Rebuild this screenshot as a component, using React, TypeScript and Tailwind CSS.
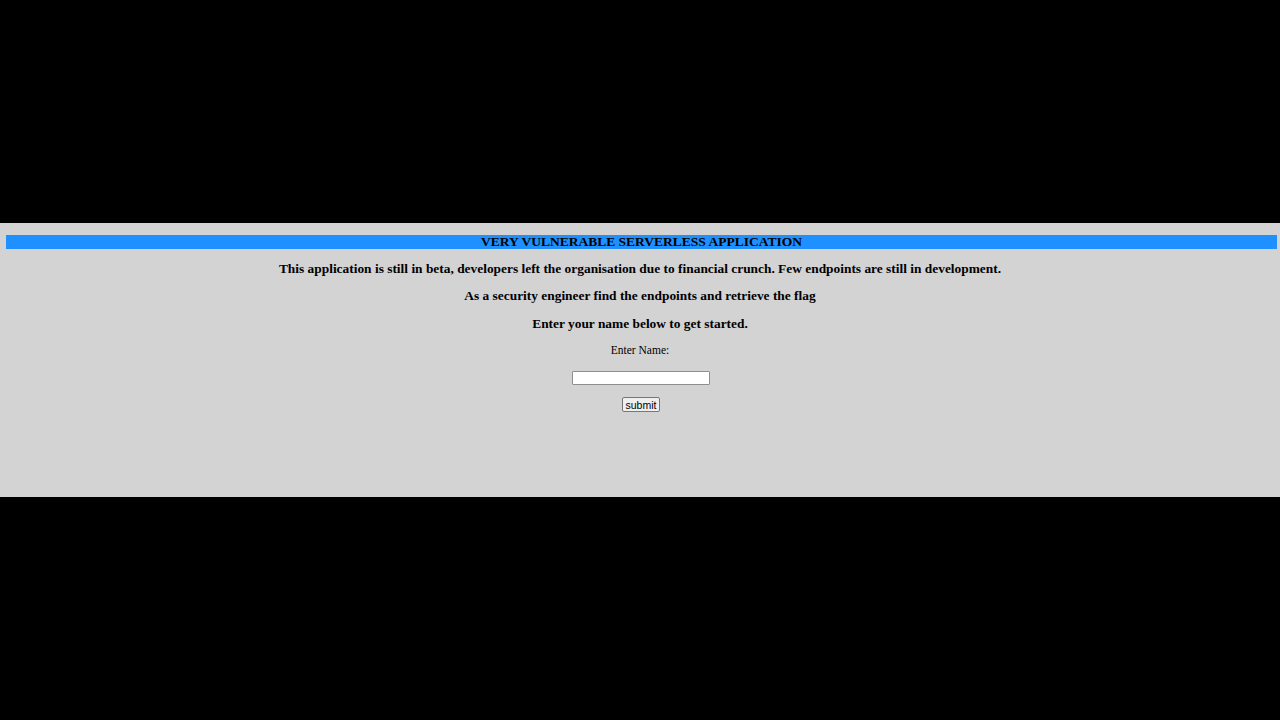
import React from "react";

export default function App() {
  return (
    <div className="w-full h-[720px] bg-black flex flex-col justify-center" style={{ fontFamily: '"Liberation Serif", serif' }}>
      <div className="h-[274px] bg-[#d3d3d3] flex flex-col items-center text-black">
        <div className="self-stretch ml-[6px] mr-[3px] mt-[12px] h-[14px] bg-[#1e90ff] flex items-center justify-center">
          <span className="text-[13.5px] font-bold leading-[14px]">VERY VULNERABLE SERVERLESS APPLICATION</span>
        </div>
        <p className="mt-[13px] text-[13.4px] font-bold leading-[14px]">This application is still in beta, developers left the organisation due to financial crunch. Few endpoints are still in development.</p>
        <p className="mt-[13px] text-[13.4px] font-bold leading-[14px]">As a security engineer find the endpoints and retrieve the flag</p>
        <p className="mt-[14px] text-[13.4px] font-bold leading-[14px]">Enter your name below to get started.</p>
        <label className="mt-[13px] text-[11.5px] leading-[12px]">Enter Name:</label>
        <input type="text" className="mt-[15px] ml-[2px] w-[138px] h-[14px] bg-white border border-[#8f8f8f] rounded-[1px]" />
        <button className="mt-[12px] ml-[2px] h-[15px] w-[38px] text-[10.5px] leading-[12px] bg-[#efefef] border border-[#767676] rounded-[2px] flex items-center justify-center" style={{ fontFamily: '"Liberation Sans", Arial, sans-serif' }}>submit</button>
      </div>
    </div>
  );
}
